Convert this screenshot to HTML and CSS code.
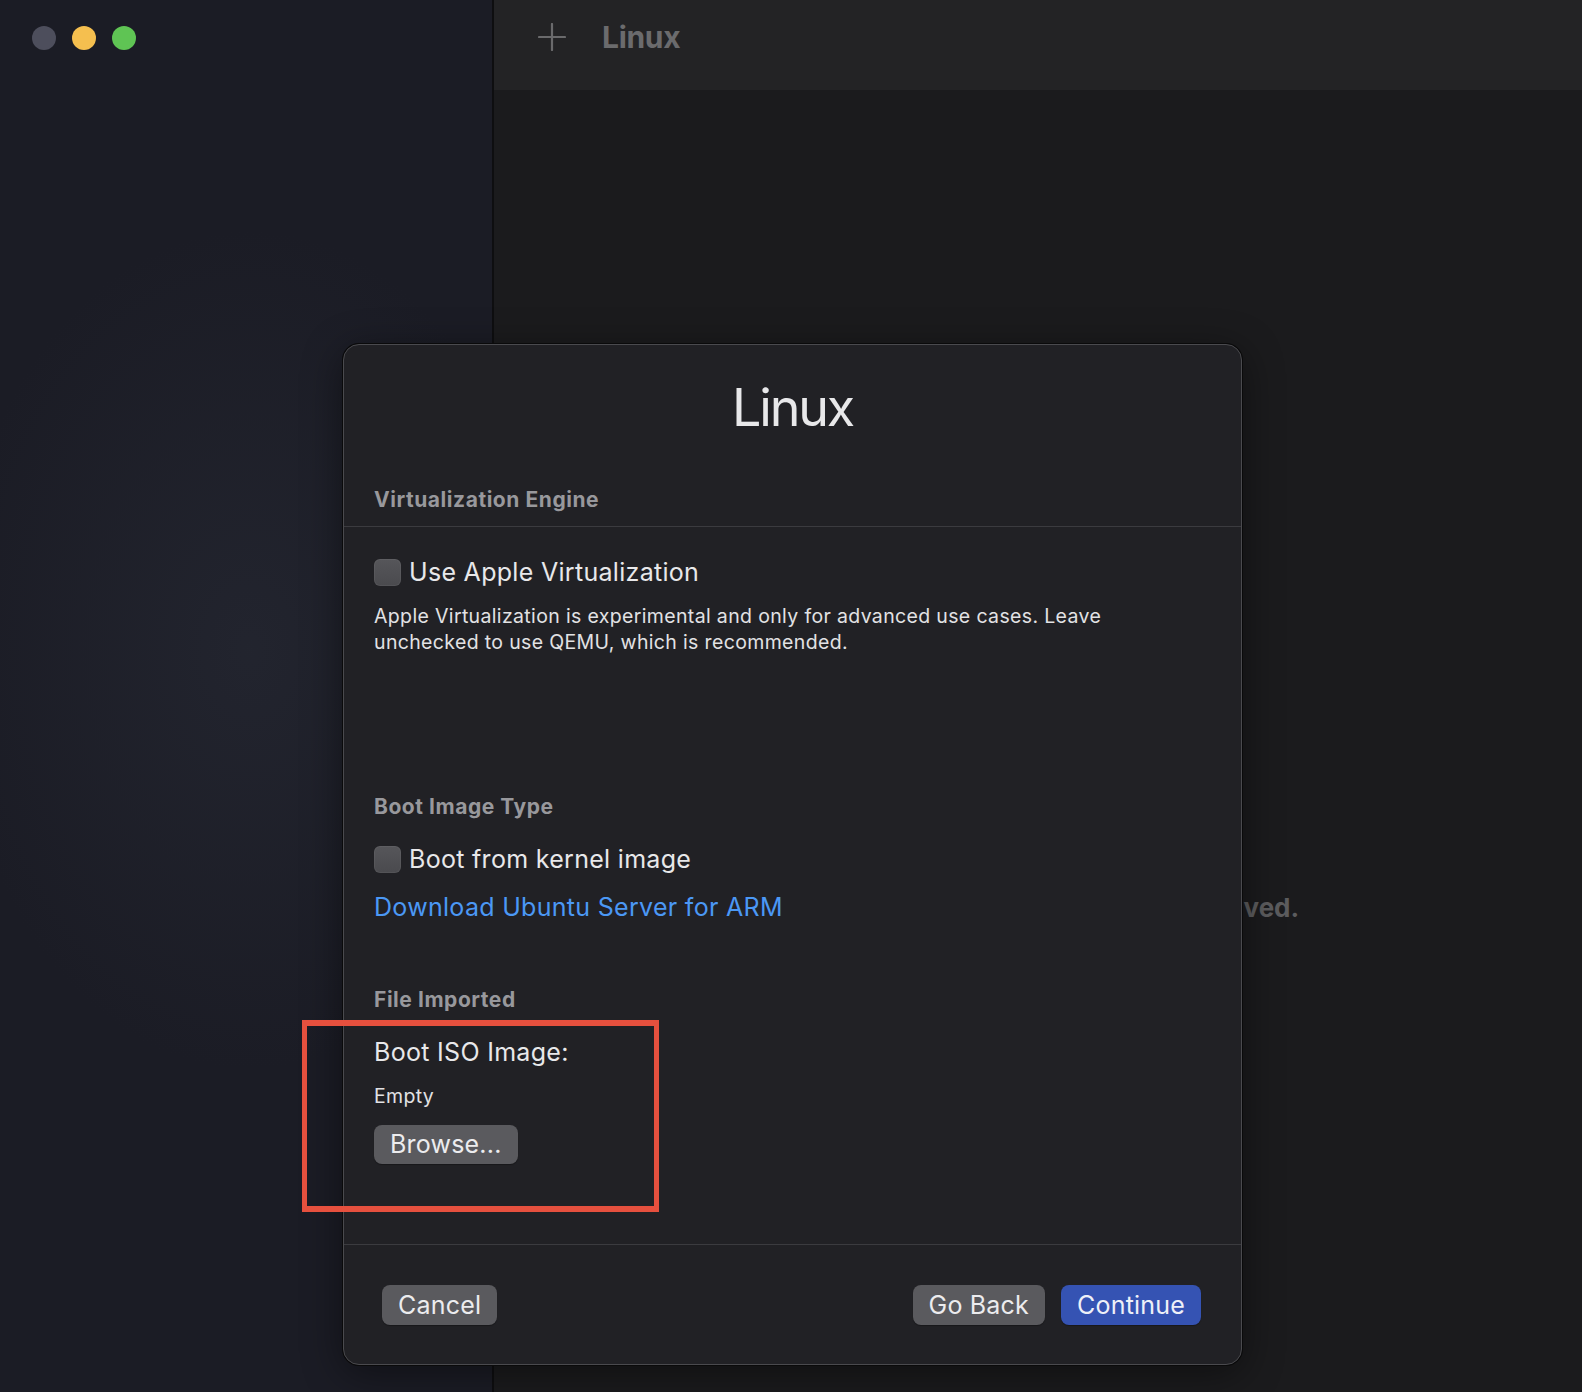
FILE: index.html
```html
<!DOCTYPE html>
<html lang="en">
<head>
<meta charset="utf-8">
<title>UTM - Linux</title>
<link rel="stylesheet" href="styles.css">
</head>
<body>
<div class="window">
  <aside class="sidebar">
    <div class="traffic">
      <span class="dot dot-close"></span>
      <span class="dot dot-min"></span>
      <span class="dot dot-max"></span>
    </div>
  </aside>
  <main class="main">
    <header class="toolbar">
      <svg class="plus" width="28" height="28" viewBox="0 0 28 28" aria-hidden="true">
        <path d="M14 1V27M1 14H27" stroke="#6a6a6c" stroke-width="2.2" fill="none" stroke-linecap="round"/>
      </svg>
      <span class="tb-title">Linux</span>
    </header>
    <div class="placeholder">
      <p class="placeholder-text">Your virtual machine has not been saved.</p>
    </div>
  </main>

  <section class="sheet">
    <h1 class="sheet-title">Linux</h1>
    <h2 class="sec-head sec-first">Virtualization Engine</h2>
    <div class="sep"></div>

    <label class="check-row row-apple">
      <span class="checkbox"></span>
      <span class="check-label">Use Apple Virtualization</span>
    </label>
    <p class="desc">Apple Virtualization is experimental and only for advanced use cases. Leave<br>unchecked to use QEMU, which is recommended.</p>

    <h2 class="sec-head sec-boot">Boot Image Type</h2>
    <label class="check-row row-kernel">
      <span class="checkbox"></span>
      <span class="check-label">Boot from kernel image</span>
    </label>
    <a class="link">Download Ubuntu Server for ARM</a>

    <h2 class="sec-head sec-file">File Imported</h2>
    <div class="iso-label">Boot ISO Image:</div>
    <div class="iso-value">Empty</div>
    <button class="btn btn-browse">Browse...</button>

    <div class="sep sep-footer"></div>
    <footer class="sheet-footer">
      <button class="btn">Cancel</button>
      <div class="footer-right">
        <button class="btn">Go Back</button>
        <button class="btn btn-primary">Continue</button>
      </div>
    </footer>
  </section>

  <div class="annotation"></div>
</div>
</body>
</html>
```

FILE: styles.css
```css
* { box-sizing: border-box; }

html, body {
  margin: 0;
  padding: 0;
  background: #1b1b1d;
}

body {
  font-family: "Inter", "Liberation Sans", sans-serif;
  color: #e6e6e8;
}

.window {
  position: relative;
  width: 1582px;
  height: 1392px;
  display: grid;
  grid-template-columns: 494px 1fr;
  overflow: hidden;
}

/* Sidebar */
.sidebar {
  background:
    radial-gradient(ellipse 300px 420px at 250px 650px, rgba(40, 43, 54, 0.55), rgba(40, 43, 54, 0) 100%),
    #1b1c25;
  border-right: 2px solid #0e0e10;
}

.traffic {
  display: flex;
  gap: 16px;
  padding: 26px 0 0 32px;
}

.dot {
  width: 24px;
  height: 24px;
  border-radius: 50%;
}
.dot-close { background: #4d4e5c; }
.dot-min { background: #f5bf4f; }
.dot-max { background: #5fc454; }

/* Main */
.main {
  display: flex;
  flex-direction: column;
  background: #1b1b1d;
}

.toolbar {
  height: 90px;
  background: #232325;
  display: flex;
  align-items: center;
  padding: 0 0 16px 44px;
  gap: 36px;
}

.plus { display: block; flex: none; }

.tb-title {
  font-size: 30px;
  font-weight: 700;
  color: #6b6b6d;
  letter-spacing: -0.3px;
}

.placeholder {
  flex: 1;
  display: flex;
  justify-content: center;
}

.placeholder-text {
  margin: 802px 0 0 0;
  font-size: 26px;
  font-weight: 700;
  line-height: 32px;
  color: #5c5c5e;
}

/* Sheet dialog */
.sheet {
  position: absolute;
  left: 343px;
  top: 344px;
  width: 899px;
  height: 1021px;
  background: #212125;
  border: 1px solid #4a4a4e;
  border-radius: 16px;
  box-shadow: 0 0 0 1px #0a0a0b, 0 8px 40px rgba(0, 0, 0, 0.45);
  padding: 0 30px;
  display: flex;
  flex-direction: column;
}

.sheet-title {
  margin: 31px 0 0;
  font-size: 52px;
  line-height: 64px;
  font-weight: 400;
  text-align: center;
  color: #e8e8ea;
  letter-spacing: -2.2px;
}

.sec-head {
  margin: 0;
  font-size: 21px;
  line-height: 24px;
  font-weight: 700;
  color: #98989c;
  letter-spacing: 0.55px;
}
.sec-first { margin-top: 48px; }
.sec-boot { margin-top: 140px; }
.sec-file { margin-top: 65px; }

.sep {
  margin: 14px -30px 0;
  height: 1px;
  flex: none;
  background: #3b3b3f;
}

.check-row {
  display: flex;
  align-items: center;
  gap: 8px;
  height: 28px;
}
.row-apple { margin-top: 31px; }
.row-kernel { margin-top: 26px; }

.checkbox {
  width: 27px;
  height: 27px;
  border-radius: 6px;
  background: linear-gradient(#56565a, #4a4a4e);
  box-shadow: inset 0 0 0 1px rgba(255, 255, 255, 0.05);
  flex: none;
}

.check-label {
  font-size: 25px;
  line-height: 28px;
  color: #e8e8ea;
  letter-spacing: 0.3px;
}

.desc {
  margin: 17px 0 0;
  font-size: 19.5px;
  line-height: 26px;
  color: #e2e2e4;
  letter-spacing: 0.35px;
}

.link {
  margin-top: 18px;
  font-size: 25px;
  line-height: 32px;
  color: #4b98f5;
  text-decoration: none;
  letter-spacing: 0.3px;
}

.iso-label {
  margin-top: 24px;
  font-size: 25px;
  line-height: 32px;
  color: #e8e8ea;
  letter-spacing: 0.3px;
}

.iso-value {
  margin-top: 15px;
  font-size: 19.5px;
  line-height: 26px;
  color: #e2e2e4;
  letter-spacing: 0.3px;
}

.btn {
  font-family: inherit;
  font-size: 25px;
  height: 40px;
  line-height: 40px;
  padding: 0 16px;
  border: none;
  border-radius: 8px;
  background: #5a5a5e;
  color: #ececee;
  letter-spacing: 0.2px;
  box-shadow: 0 1px 1px rgba(0, 0, 0, 0.3);
}

.btn-browse {
  align-self: flex-start;
  margin-top: 16px;
  height: 39px;
  line-height: 39px;
}

.btn-primary {
  background: #3553b3;
  color: #eef0f8;
}

.sep-footer { margin-top: 80px; }

.sheet-footer {
  margin: 40px 10px 0 8px;
  display: flex;
  justify-content: space-between;
  align-items: center;
}

.footer-right {
  display: flex;
  gap: 16px;
}

/* Red annotation box overlay */
.annotation {
  position: absolute;
  left: 302px;
  top: 1020px;
  width: 357px;
  height: 192px;
  border: solid #e6503e;
  border-width: 6px 5px;
}
```
